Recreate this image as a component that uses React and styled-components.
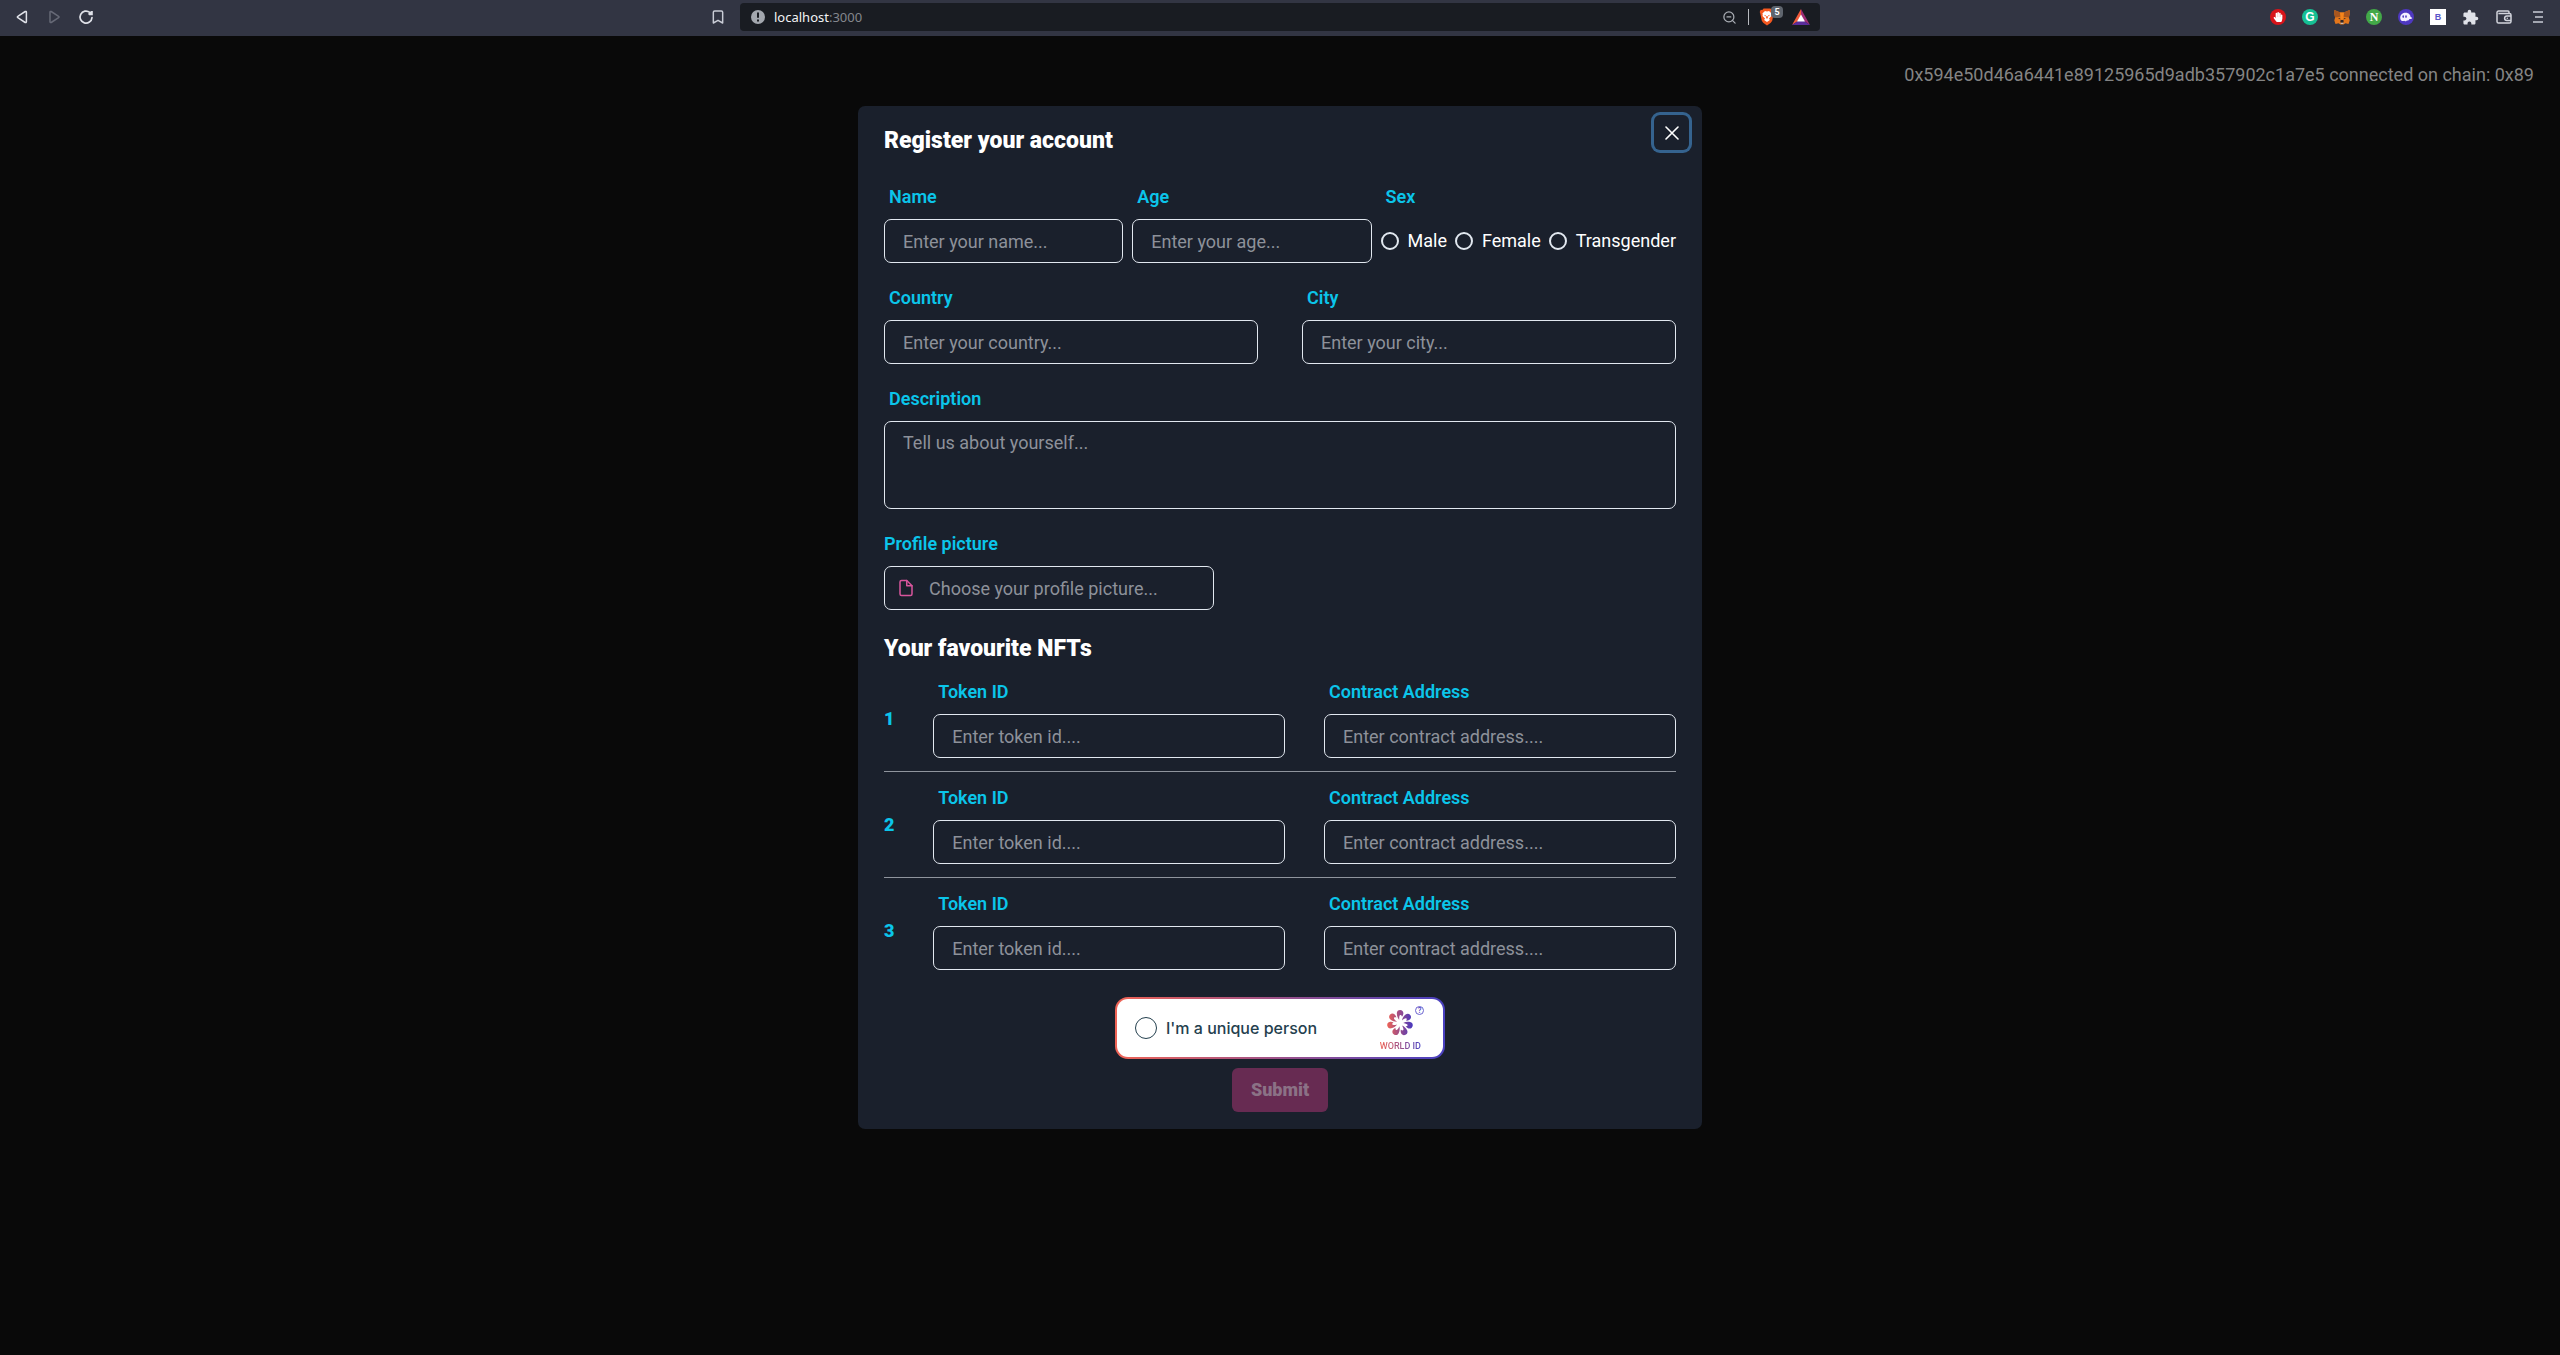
import React from "react";
import styled, { createGlobalStyle } from "styled-components";
import { Bookmark, ZoomOut } from "lucide-react";
import { MdExtension } from "react-icons/md";
import { FiFile } from "react-icons/fi";
import { FaHandPaper } from "react-icons/fa";

const GlobalStyle = createGlobalStyle`
  *, *::before, *::after { box-sizing: border-box; }
  body {
    margin: 0;
    min-height: 100vh;
    background: #090909;
    color: #ffffff;
    font-family: Roboto, "Liberation Sans", sans-serif;
    font-size: 18px;
    line-height: 26px;
  }
  button, input, textarea { font: inherit; color: inherit; margin: 0; }
`;

/* ---------- browser toolbar ---------- */

const Toolbar = styled.header`
  display: grid;
  grid-template-columns: 1fr minmax(0, 1080px) 1fr;
  align-items: center;
  height: 36px;
  padding-bottom: 2px;
  background: #323543;
`;

const NavGroup = styled.div`
  display: flex;
  align-items: center;
  gap: 16px;
  padding: 0 14px;
`;

const ExtensionGroup = styled.div`
  display: flex;
  align-items: center;
  justify-content: flex-end;
  gap: 16px;
  padding-right: 14px;
`;

const BrowserActions = styled.div`
  display: flex;
  align-items: center;
  gap: 18px;
  padding-left: 2px;
`;

const IconButton = styled.button`
  display: grid;
  place-items: center;
  width: 16px;
  height: 16px;
  padding: 0;
  border: 0;
  background: none;
  color: ${(p) => p.$color || "#dfe1e8"};
  ${(p) => p.$push && "margin-left: auto;"}
  svg { display: block; }
`;

const AddressBar = styled.div`
  display: flex;
  align-items: center;
  height: 28px;
  padding: 0 10px 0 11px;
  gap: 9px;
  border-radius: 4px;
  background: #191c22;
`;

const Url = styled.span`
  flex: 1;
  color: #84878d;
  font-family: "Noto Sans", "Open Sans", sans-serif;
  font-size: 13px;
  line-height: 20px;
  b { color: #f2f3f5; font-weight: 400; }
`;

const Divider = styled.span`
  width: 1px;
  height: 16px;
  margin: 0 1px 0 2px;
  background: #b8babf;
`;

const Shield = styled.span`
  position: relative;
  display: flex;
  margin-right: 8px;
`;

const Count = styled.span`
  position: absolute;
  top: -2px;
  left: 12px;
  width: 12px;
  height: 12px;
  border-radius: 4px;
  background: #5f656e;
  color: #ffffff;
  font-size: 9px;
  font-weight: 700;
  line-height: 12px;
  text-align: center;
`;

const Round = styled.button`
  display: grid;
  place-items: center;
  width: 16px;
  height: 16px;
  padding: 0;
  border: 0;
  border-radius: ${(p) => (p.$square ? "0" : "50%")};
  background: ${(p) => p.$bg};
  color: ${(p) => p.$color || "#ffffff"};
  font-family: ${(p) => (p.$serif ? '"Liberation Serif", serif' : '"Liberation Sans", sans-serif')};
  font-size: ${(p) => (p.$square ? "9px" : "12px")};
  font-weight: 700;
  line-height: 16px;
`;

/* ---------- page ---------- */

const Account = styled.p`
  margin: 0;
  padding: 26px 26px 18px;
  color: #848484;
  text-align: right;
`;

const Dialog = styled.section`
  position: relative;
  max-width: 844px;
  margin: 0 auto;
  padding: 18px 26px 17px;
  border-radius: 7px;
  background: #1a202c;
`;

const Title = styled.h2`
  margin: 0;
  font-size: 23px;
  font-weight: 900;
  line-height: 34px;
`;

const CloseButton = styled.button`
  position: absolute;
  top: 9px;
  right: 13px;
  display: grid;
  place-items: center;
  width: 35px;
  height: 35px;
  padding: 0;
  border: 0;
  border-radius: 6px;
  background: none;
  box-shadow: 0 0 0 3px #35638f;
`;

const Form = styled.form`
  display: flex;
  flex-direction: column;
  gap: 22px;
  padding-top: 26px;
`;

const Row = styled.div`
  display: flex;
  gap: ${(p) => p.$gap || 44}px;
`;

const FieldBox = styled.div`
  display: flex;
  flex-direction: column;
  gap: 9px;
  flex: ${(p) => p.$flex || "1 1 0"};
  min-width: 0;
`;

const Label = styled.label`
  padding-left: ${(p) => (p.$flush ? 0 : 5)}px;
  color: #0bc5ea;
  font-weight: 600;
`;

const Input = styled.input`
  width: 100%;
  height: 44px;
  padding: 0 17px 0 ${(p) => (p.$icon ? 44 : 18)}px;
  border: 1px solid #e2e8f0;
  border-radius: 7px;
  outline: 0;
  background: transparent;
  &::placeholder { color: #8d919a; opacity: 1; }
`;

const Textarea = styled.textarea`
  display: block;
  width: 100%;
  height: 88px;
  padding: 8px 18px;
  border: 1px solid #e2e8f0;
  border-radius: 7px;
  outline: 0;
  background: transparent;
  resize: none;
  &::placeholder { color: #8d919a; opacity: 1; }
`;

const RadioRow = styled.div`
  display: flex;
  align-items: center;
  gap: 8px;
  height: 44px;
`;

const RadioLabel = styled.label`
  display: flex;
  align-items: center;
  gap: 9px;
`;

const Radio = styled.input`
  appearance: none;
  width: 18px;
  height: 18px;
  border: 2px solid #e2e8f0;
  border-radius: 50%;
`;

const FilePicker = styled.div`
  position: relative;
  width: 330px;
  svg {
    position: absolute;
    top: 13px;
    left: 13px;
    color: #d8559c;
  }
`;

const NftList = styled.ol`
  margin: 0;
  padding: 0;
  list-style: none;
`;

const NftSection = styled.section`
  display: flex;
  flex-direction: column;
  gap: 13px;
`;

const NftRow = styled.li`
  display: flex;
  align-items: center;
  justify-content: space-between;
  & + & {
    margin-top: 13px;
    padding-top: 13px;
    border-top: 1px solid #8f949d;
  }
`;

const Index = styled.span`
  color: #0bc5ea;
  font-weight: 900;
`;

const Actions = styled.div`
  display: flex;
  flex-direction: column;
  align-items: center;
  gap: 9px;
  padding-top: 5px;
`;

const WorldId = styled.div`
  position: relative;
  display: flex;
  align-items: center;
  gap: 9px;
  width: 330px;
  height: 62px;
  padding: 0 22px 0 18px;
  border: 2px solid transparent;
  border-radius: 13px;
  background:
    linear-gradient(#ffffff, #ffffff) padding-box,
    linear-gradient(90deg, #ef6355, #4940c0) border-box;
  color: #24404e;
  font-family: Inter, "Liberation Sans", sans-serif;
  font-size: 16px;
  font-weight: 500;
`;

const PersonCheck = styled.input`
  appearance: none;
  width: 22px;
  height: 22px;
  border: 1px solid #24404e;
  border-radius: 50%;
`;

const PersonLabel = styled.label`
  flex: 1;
`;

const Brand = styled.div`
  display: flex;
  flex-direction: column;
  align-items: center;
  gap: 4px;
  padding-top: 5px;
`;

const BrandName = styled.span`
  background: linear-gradient(90deg, #ef6355, #4940c0);
  background-clip: text;
  color: transparent;
  font-family: Roboto, sans-serif;
  font-size: 9px;
  font-weight: 500;
  line-height: 12px;
`;

const Help = styled.button`
  position: absolute;
  top: 7px;
  right: 19px;
  width: 9px;
  height: 9px;
  padding: 0;
  border: 1px solid #6a62d0;
  border-radius: 50%;
  background: none;
  color: #4940c0;
  font-size: 7px;
  line-height: 7px;
`;

const Submit = styled.button`
  width: 96px;
  height: 44px;
  padding: 0;
  border: 0;
  border-radius: 6px;
  background: #672b52;
  color: #8b7286;
  font-weight: 900;
`;

/* ---------- drawings ---------- */

const Triangle = ({ flip }) => (
  <svg width="16" height="16" viewBox="0 0 16 16" aria-hidden="true">
    <path
      d={flip ? "M4 3.2v9.6a.8.8 0 0 0 1.2.7L12.6 8.7a.8.8 0 0 0 0-1.4L5.2 2.5A.8.8 0 0 0 4 3.2z" : "M12.4 3.2v9.6a.8.8 0 0 1-1.2.7L3.8 8.7a.8.8 0 0 1 0-1.4l7.4-4.8a.8.8 0 0 1 1.2.7z"}
      fill="none"
      stroke="currentColor"
      strokeWidth="1.5"
    />
  </svg>
);

const Reload = () => (
  <svg width="16" height="16" viewBox="0 0 16 16" aria-hidden="true">
    <path d="M14 8.6A6 6 0 1 1 11.8 3.4" fill="none" stroke="currentColor" strokeWidth="1.7" strokeLinecap="round" />
    <path d="M10.4 5.6V4l3-1.9h1.4v4.2h-3.7z" fill="currentColor" />
  </svg>
);

const SiteInfo = () => (
  <svg width="14" height="14" viewBox="0 0 14 14" aria-hidden="true">
    <circle cx="7" cy="7" r="7" fill="#a3a7ae" />
    <path d="M6 2.5h2v5.3H6zM6 9.4h2v2H6z" fill="#191c22" />
  </svg>
);

const Lion = () => (
  <svg width="16" height="18" viewBox="0 0 16 18" aria-hidden="true">
    <path d="M4.6.6h6.8l1.3 1.4 1.6-.2 1 2.2-.5 1.2-1.6 7.5-1.4 2L8 17.4l-3.8-2.7-1.4-2L1.2 5.2.7 4l1-2.2 1.6.2z" fill="#f4581f" />
    <path d="M8 3.4l2-.4 2.6 2.4-.4 1.3.3 1.4-2.5 2.4.9 1.4L8 14.1l-2.9-2.2.9-1.4-2.5-2.4.3-1.4-.4-1.3L6 3z" fill="#fff" />
    <path d="M4.9 6.7l2.1.7-.5 1.2zM11.1 6.7L9 7.4l.5 1.2zM7.4 8h1.2l.3 2.1-.9.7-.9-.7z" fill="#f4581f" />
  </svg>
);

const BatTriangle = () => (
  <svg width="18" height="16" viewBox="0 0 18 16" aria-hidden="true">
    <path d="M9 0L0 16l9-6z" fill="#ef5a3a" />
    <path d="M9 0l9 16-9-6z" fill="#9e2d75" />
    <path d="M0 16h18l-9-6z" fill="#5a2d9c" />
    <path d="M9 5.5L13 12.5H5z" fill="#fff" />
  </svg>
);

const Fox = () => (
  <svg width="16" height="16" viewBox="0 0 16 16" aria-hidden="true">
    <path d="M.4.9L6.2 3.6h3.6L15.6.9l.1 4-.8 3.7.8 2.8-1.2 3.6-3-.8-1.900 1.300H6.400l-1.900-1.300-3 .8L.3 11.400l.8-2.800L.3 4.900z" fill="#e3761b" />
    <path d="M.4.9l5.8 2.700.7 4.200-5.800.8L.3 4.900zM15.600.9L9.800 3.600l-.7 4.200 5.800.8.8-3.700z" fill="#a8561f" />
    <path d="M6 3.600h4l-.8 7H6.800z" fill="#f6851b" />
    <path d="M6.300 12l.5-1h2.400l.5 1-.3 1.800H6.600zM3.900 9l2.200.3.2 1.200zM12.100 9l-2.200.3-.2 1.200z" fill="#30282a" />
    <path d="M6.500 13.700h3l-.2 1.400H6.700z" fill="#cdbdb0" />
  </svg>
);

const Ghost = () => (
  <svg width="16" height="16" viewBox="0 0 16 16" aria-hidden="true">
    <circle cx="8" cy="8" r="8" fill="#4e38c0" />
    <path d="M2.2 8.700c0-3 2.500-5 5.500-5 3.200 0 4.800 2.300 4.900 4.300.5.500 1.700.4 1.600 1.100-.1.900-2.100 1.100-2.800.9-.6 1.300-1.700 2-2.500 1.400-.9 1-2.100 1.100-2.800.4C4.300 12.600 2.200 11.500 2.200 8.700z" fill="#f4f0ff" />
    <ellipse cx="5.2" cy="7.6" rx=".8" ry="1.4" fill="#4e38c0" />
    <ellipse cx="8" cy="7.6" rx=".8" ry="1.4" fill="#4e38c0" />
  </svg>
);

const Wallet = () => (
  <svg width="16" height="14" viewBox="0 0 16 14" aria-hidden="true">
    <path d="M13 3.2V2a1 1 0 0 0-1-1H2.6A1.6 1.6 0 0 0 1 2.6v8.8A1.6 1.6 0 0 0 2.6 13h10.800a1.600 1.600 0 0 0 1.600-1.600V5a1.600 1.600 0 0 0-1.600-1.600H2.400" fill="none" stroke="currentColor" strokeWidth="1.5" />
    <path d="M15 6h-4.2a2.2 2.2 0 0 0 0 4.4H15" fill="none" stroke="currentColor" strokeWidth="1.5" />
    <circle cx="11.3" cy="8.2" r=".8" fill="currentColor" />
  </svg>
);

const Menu = () => (
  <svg width="16" height="14" viewBox="0 0 16 14" aria-hidden="true">
    <path d="M3 2h10M5 7h8M3 12h10" stroke="currentColor" strokeWidth="1.6" />
  </svg>
);

const Cross = () => (
  <svg width="14" height="14" viewBox="0 0 14 14" aria-hidden="true">
    <path d="M1 1l12 12M13 1L1 13" stroke="#fff" strokeWidth="1.6" strokeLinecap="round" />
  </svg>
);

const PETALS = [0, 1, 2, 3, 4, 5, 6];

const WorldLogo = () => (
  <svg width="26" height="26" viewBox="-13 -13 26 26" aria-hidden="true">
    <defs>
      <linearGradient id="world" gradientUnits="userSpaceOnUse" x1="-13" y1="0" x2="13" y2="0">
        <stop offset="0" stopColor="#ef6355" />
        <stop offset="1" stopColor="#4436c0" />
      </linearGradient>
      <clipPath id="petals">
        {PETALS.map((i) => (
          <path
            key={i}
            transform={`rotate(${(i * 360) / 7})`}
            d="M-3.2-9.700C-3.200-11.800-1.800-13 .1-13 2.200-13 3.500-11.500 3.400-9.400 3.300-8.200 2.800-7.100 2-6.200 1.700-7.300 1.100-8 .4-7.900-.6-7.700-.9-6-.8-3.100-2.400-4.900-3.200-7.300-3.200-9.700z"
          />
        ))}
      </clipPath>
    </defs>
    <rect x="-13" y="-13" width="26" height="26" fill="url(#world)" clipPath="url(#petals)" />
  </svg>
);

/* ---------- composition ---------- */

const Field = ({ id, label, placeholder, flex }) => (
  <FieldBox $flex={flex}>
    <Label htmlFor={id}>{label}</Label>
    <Input id={id} placeholder={placeholder} />
  </FieldBox>
);

const BrowserToolbar = () => (
  <Toolbar>
    <NavGroup>
      <IconButton aria-label="Back"><Triangle /></IconButton>
      <IconButton aria-label="Forward" $color="#666976"><Triangle flip /></IconButton>
      <IconButton aria-label="Reload"><Reload /></IconButton>
      <IconButton aria-label="Bookmark" $push $color="#c9ccd6">
        <Bookmark size={16} strokeWidth={2.2} />
      </IconButton>
    </NavGroup>
    <AddressBar>
      <SiteInfo />
      <Url><b>localhost</b>:3000</Url>
      <IconButton aria-label="Zoom" $color="#a9adb4"><ZoomOut size={15} strokeWidth={2} /></IconButton>
      <Divider />
      <Shield><Lion /><Count>5</Count></Shield>
      <BatTriangle />
    </AddressBar>
    <ExtensionGroup>
      <Round aria-label="Blocker" $bg="#d8141a"><FaHandPaper size={10} /></Round>
      <Round $bg="#16bf94">G</Round>
      <IconButton aria-label="Wallet extension"><Fox /></IconButton>
      <Round $bg="#43a948" $serif>N</Round>
      <IconButton aria-label="Ghost extension"><Ghost /></IconButton>
      <Round $bg="#ffffff" $color="#5a55c8" $square>B</Round>
      <IconButton aria-label="Extensions"><MdExtension size={17} /></IconButton>
      <BrowserActions>
        <IconButton aria-label="Wallet" $color="#d3d5dd"><Wallet /></IconButton>
        <IconButton aria-label="Menu" $color="#c9ccd6"><Menu /></IconButton>
      </BrowserActions>
    </ExtensionGroup>
  </Toolbar>
);

export default function App() {
  return (
    <>
      <GlobalStyle />
      <BrowserToolbar />
      <main>
        <Account>0x594e50d46a6441e89125965d9adb357902c1a7e5 connected on chain: 0x89</Account>
        <Dialog role="dialog" aria-labelledby="title">
          <Title id="title">Register your account</Title>
          <CloseButton type="button" aria-label="Close"><Cross /></CloseButton>
          <Form onSubmit={(e) => e.preventDefault()}>
            <Row $gap={9}>
              <Field id="name" label="Name" placeholder="Enter your name..." />
              <Field id="age" label="Age" placeholder="Enter your age..." />
              <FieldBox $flex="0 0 auto" role="radiogroup" aria-labelledby="sex">
                <Label as="span" id="sex">Sex</Label>
                <RadioRow>
                  {["Male", "Female", "Transgender"].map((s) => (
                    <RadioLabel key={s}>
                      <Radio type="radio" name="sex" value={s} />
                      {s}
                    </RadioLabel>
                  ))}
                </RadioRow>
              </FieldBox>
            </Row>
            <Row>
              <Field id="country" label="Country" placeholder="Enter your country..." />
              <Field id="city" label="City" placeholder="Enter your city..." />
            </Row>
            <FieldBox>
              <Label htmlFor="description">Description</Label>
              <Textarea id="description" placeholder="Tell us about yourself..." />
            </FieldBox>
            <FieldBox>
              <Label htmlFor="picture" $flush>Profile picture</Label>
              <FilePicker>
                <Input id="picture" $icon readOnly placeholder="Choose your profile picture..." />
                <FiFile size={18} />
              </FilePicker>
            </FieldBox>
            <NftSection>
              <Title>Your favourite NFTs</Title>
              <NftList>
                {[1, 2, 3].map((n) => (
                  <NftRow key={n}>
                    <Index>{n}</Index>
                    <Field id={`token-${n}`} label="Token ID" placeholder="Enter token id...." flex="0 1 352px" />
                    <Field id={`contract-${n}`} label="Contract Address" placeholder="Enter contract address...." flex="0 1 352px" />
                  </NftRow>
                ))}
              </NftList>
            </NftSection>
            <Actions>
              <WorldId>
                <PersonCheck type="checkbox" id="person" />
                <PersonLabel htmlFor="person">I'm a unique person</PersonLabel>
                <Brand>
                  <WorldLogo />
                  <BrandName>WORLD ID</BrandName>
                </Brand>
                <Help type="button">?</Help>
              </WorldId>
              <Submit type="submit" disabled>Submit</Submit>
            </Actions>
          </Form>
        </Dialog>
      </main>
    </>
  );
}
